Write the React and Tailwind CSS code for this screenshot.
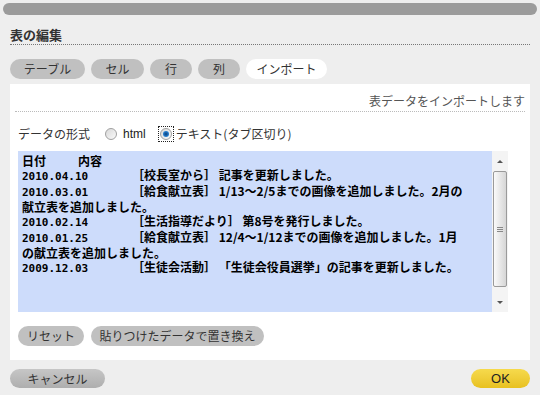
import React from "react";

const tabs = [
  { label: "テーブル", w: "w-[75px]" },
  { label: "セル", w: "w-[53px]" },
  { label: "行", w: "w-[42px]" },
  { label: "列", w: "w-[42px]" },
  { label: "インポート", w: "w-[81px]", active: true },
];

const rows = [
  { date: "2010.04.10", text: "［校長室から］ 記事を更新しました。" },
  { date: "2010.03.01", text: "［給食献立表］ 1/13〜2/5までの画像を追加しました。2月の" },
  { text: "献立表を追加しました。" },
  { date: "2010.02.14", text: "［生活指導だより］ 第8号を発行しました。" },
  { date: "2010.01.25", text: "［給食献立表］ 12/4〜1/12までの画像を追加しました。1月" },
  { text: "の献立表を追加しました。" },
  { date: "2009.12.03", text: "［生徒会活動］ 「生徒会役員選挙」の記事を更新しました。" },
];

const Radio = ({ checked }) => (
  <span className="relative w-[12px] h-[12px] rounded-full border border-[#a0a0a0] bg-gradient-to-br from-[#d8d8d8] to-[#fafafa] flex items-center justify-center">
    {checked && (
      <span className="w-[6px] h-[6px] rounded-full bg-[radial-gradient(circle,#0b3f7a_0%,#2a86d8_70%)]" />
    )}
  </span>
);

const App = () => {
  return (
    <div className="w-[540px] h-[395px] bg-[#eeeeee] flex flex-col font-['Noto_Sans_CJK_JP',sans-serif] text-[12px] text-[#333] overflow-hidden">
      {/* TOP BAR */}
      <div className="mx-[3px] mt-[3px] h-[12px] rounded-full bg-[#9b9b9b]" />

      {/* TITLE */}
      <div className="mx-[10px] mt-[11px] h-[19px] leading-[18px] text-[13px] font-bold border-b border-dotted border-[#777]">
        表の編集
      </div>

      {/* TABS */}
      <div className="mx-[10px] mt-[14px] flex gap-[6px]">
        {tabs.map((t) => (
          <div
            key={t.label}
            className={`${t.w} h-[20px] rounded-full flex items-center justify-center leading-none ${
              t.active ? "bg-white" : "bg-[#c0c0c0]"
            }`}
          >
            {t.label}
          </div>
        ))}
      </div>

      {/* PANEL */}
      <div className="mx-[10px] mt-[5px] h-[276px] bg-white flex flex-col">
        <div className="mx-[5px] pt-[9px] pb-[2px] leading-[16px] text-right text-[#555] border-b border-dotted border-[#bbb]">
          表データをインポートします
        </div>

        <div className="ml-[8px] mt-[14px] h-[16px] flex items-center">
          <span>データの形式</span>
          <span className="ml-[15px]">
            <Radio />
          </span>
          <span className="ml-[6px] font-['Liberation_Sans',sans-serif] text-[#222]">html</span>
          <span className="ml-[13px] flex items-center outline outline-1 outline-dotted outline-[#222] outline-offset-0 p-px">
            <Radio checked />
          </span>
          <span className="ml-[3px]">テキスト(タブ区切り)</span>
        </div>

        {/* DATA AREA */}
        <div className="ml-[8px] mt-[9px] w-[490px] h-[161px] flex">
          <div className="flex-1 bg-[#cddcfb] pl-[4px] pt-[3px] text-black font-bold text-[12px] leading-[14px] whitespace-pre">
            <div>
              <span className="inline-block w-[56px]">日付</span>内容
            </div>
            {rows.map((r, i) => (
              <div key={i}>
                {r.date && (
                  <span className="inline-block w-[110px] font-['DejaVu_Sans_Mono',monospace] text-[11px]">
                    {r.date}
                  </span>
                )}
                {r.text}
              </div>
            ))}
          </div>
          <div className="w-[16px] bg-[#f4f4f4] flex flex-col items-center">
            <div className="h-[20px] flex items-center justify-center">
              <span className="w-0 h-0 border-x-[3px] border-x-transparent border-b-[3px] border-b-[#555]" />
            </div>
            <div className="w-[14px] h-[116px] rounded-[2px] border border-[#9a9a9a] bg-gradient-to-r from-[#fafafa] to-[#d6d6d6] flex flex-col items-center justify-center gap-[1px]">
              <span className="w-[6px] h-px bg-[#888]" />
              <span className="w-[6px] h-px bg-[#888]" />
              <span className="w-[6px] h-px bg-[#888]" />
            </div>
            <div className="flex-1 flex items-end justify-center pb-[8px]">
              <span className="w-0 h-0 border-x-[3px] border-x-transparent border-t-[3px] border-t-[#555]" />
            </div>
          </div>
        </div>

        <div className="ml-[8px] mt-[14px] flex gap-[7px]">
          <button className="w-[66px] h-[20px] rounded-full bg-[#c0c0c0] leading-none">リセット</button>
          <button className="w-[173px] h-[20px] rounded-full bg-[#c0c0c0] leading-none">貼りつけたデータで置き換え</button>
        </div>
      </div>

      {/* FOOTER */}
      <div className="mx-[10px] mt-[9px] flex justify-between">
        <button className="w-[95px] h-[19px] rounded-full bg-gradient-to-b from-[#c6c6c6] to-[#aeaeae] leading-none">
          キャンセル
        </button>
        <button className="w-[59px] h-[19px] rounded-full bg-gradient-to-b from-[#f6da4c] to-[#e8c11e] leading-none font-['Liberation_Sans',sans-serif] text-[13px] text-[#222]">
          OK
        </button>
      </div>
    </div>
  );
};

export default App;
